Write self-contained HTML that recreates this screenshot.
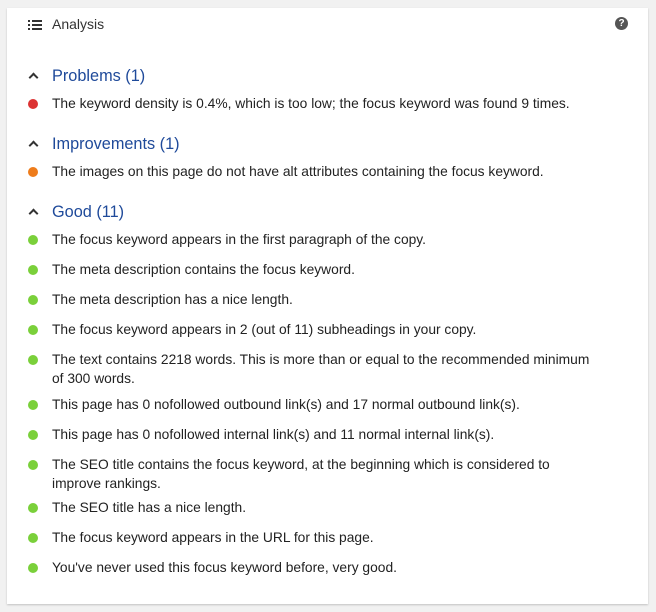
<!DOCTYPE html>
<html><head><style>
body{margin:0;background:#f1f1f1;font-family:"Liberation Sans",sans-serif;width:656px;height:612px;overflow:hidden}
.card{position:absolute;left:7px;top:8px;width:641px;height:596px;background:#fff;box-shadow:0 1px 2px rgba(0,0,0,.2)}
.t{position:absolute;left:52px;font-size:13.8px;color:#222;line-height:19px;white-space:nowrap}
.d{position:absolute;left:28px;width:10px;height:10px;border-radius:50%}
.h{position:absolute;left:52px;font-size:16.3px;color:#1f4a9a;line-height:20px}
.c{position:absolute;left:30px;width:5px;height:5px;border-left:2px solid #333;border-top:2px solid #333;transform:rotate(45deg)}
.l{position:absolute;left:28px;width:14px;height:2px}
.l i{position:absolute;left:0;top:0;width:2px;height:2px;background:#333}
.l b{position:absolute;left:4px;top:0;width:10px;height:2px;background:#333}
</style></head><body>
<div class="card"></div>
<div class="l" style="top:20px"><i></i><b></b></div>
<div class="l" style="top:24px"><i></i><b></b></div>
<div class="l" style="top:28px"><i></i><b></b></div>
<div style="position:absolute;left:52px;top:16px;font-size:14px;color:#333">Analysis</div>
<div style="position:absolute;left:615px;top:17px;width:13px;height:13px;border-radius:50%;background:#555;color:#fff;font-size:10px;font-weight:bold;text-align:center;line-height:13px">?</div>
<div id="c"></div>
<script>
var items=[
['h',66,'Problems (1)'],['r',94,'The keyword density is 0.4%, which is too low; the focus keyword was found 9 times.'],
['h',134,'Improvements (1)'],['o',162,'The images on this page do not have alt attributes containing the focus keyword.'],
['h',202,'Good (11)'],
['g',230,'The focus keyword appears in the first paragraph of the copy.'],
['g',260,'The meta description contains the focus keyword.'],
['g',290,'The meta description has a nice length.'],
['g',320,'The focus keyword appears in 2 (out of 11) subheadings in your copy.'],
['g',350,'The text contains 2218 words. This is more than or equal to the recommended minimum<br>of 300 words.'],
['g',395,'This page has 0 nofollowed outbound link(s) and 17 normal outbound link(s).'],
['g',425,'This page has 0 nofollowed internal link(s) and 11 normal internal link(s).'],
['g',455,'The SEO title contains the focus keyword, at the beginning which is considered to<br>improve rankings.'],
['g',498,'The SEO title has a nice length.'],
['g',528,'The focus keyword appears in the URL for this page.'],
['g',558,"You've never used this focus keyword before, very good."]];
var col={r:'#dc3232',o:'#ee7c1b',g:'#7ad03a'},h='';
items.forEach(function(i){
if(i[0]=='h'){h+='<div class="c" style="top:'+(i[1]+8)+'px"></div><div class="h" style="top:'+i[1]+'px">'+i[2]+'</div>';}
else{h+='<div class="d" style="top:'+(i[1]+5)+'px;background:'+col[i[0]]+'"></div><div class="t" style="top:'+i[1]+'px">'+i[2]+'</div>';}
});
document.getElementById('c').innerHTML=h;
</script>
</body></html>
